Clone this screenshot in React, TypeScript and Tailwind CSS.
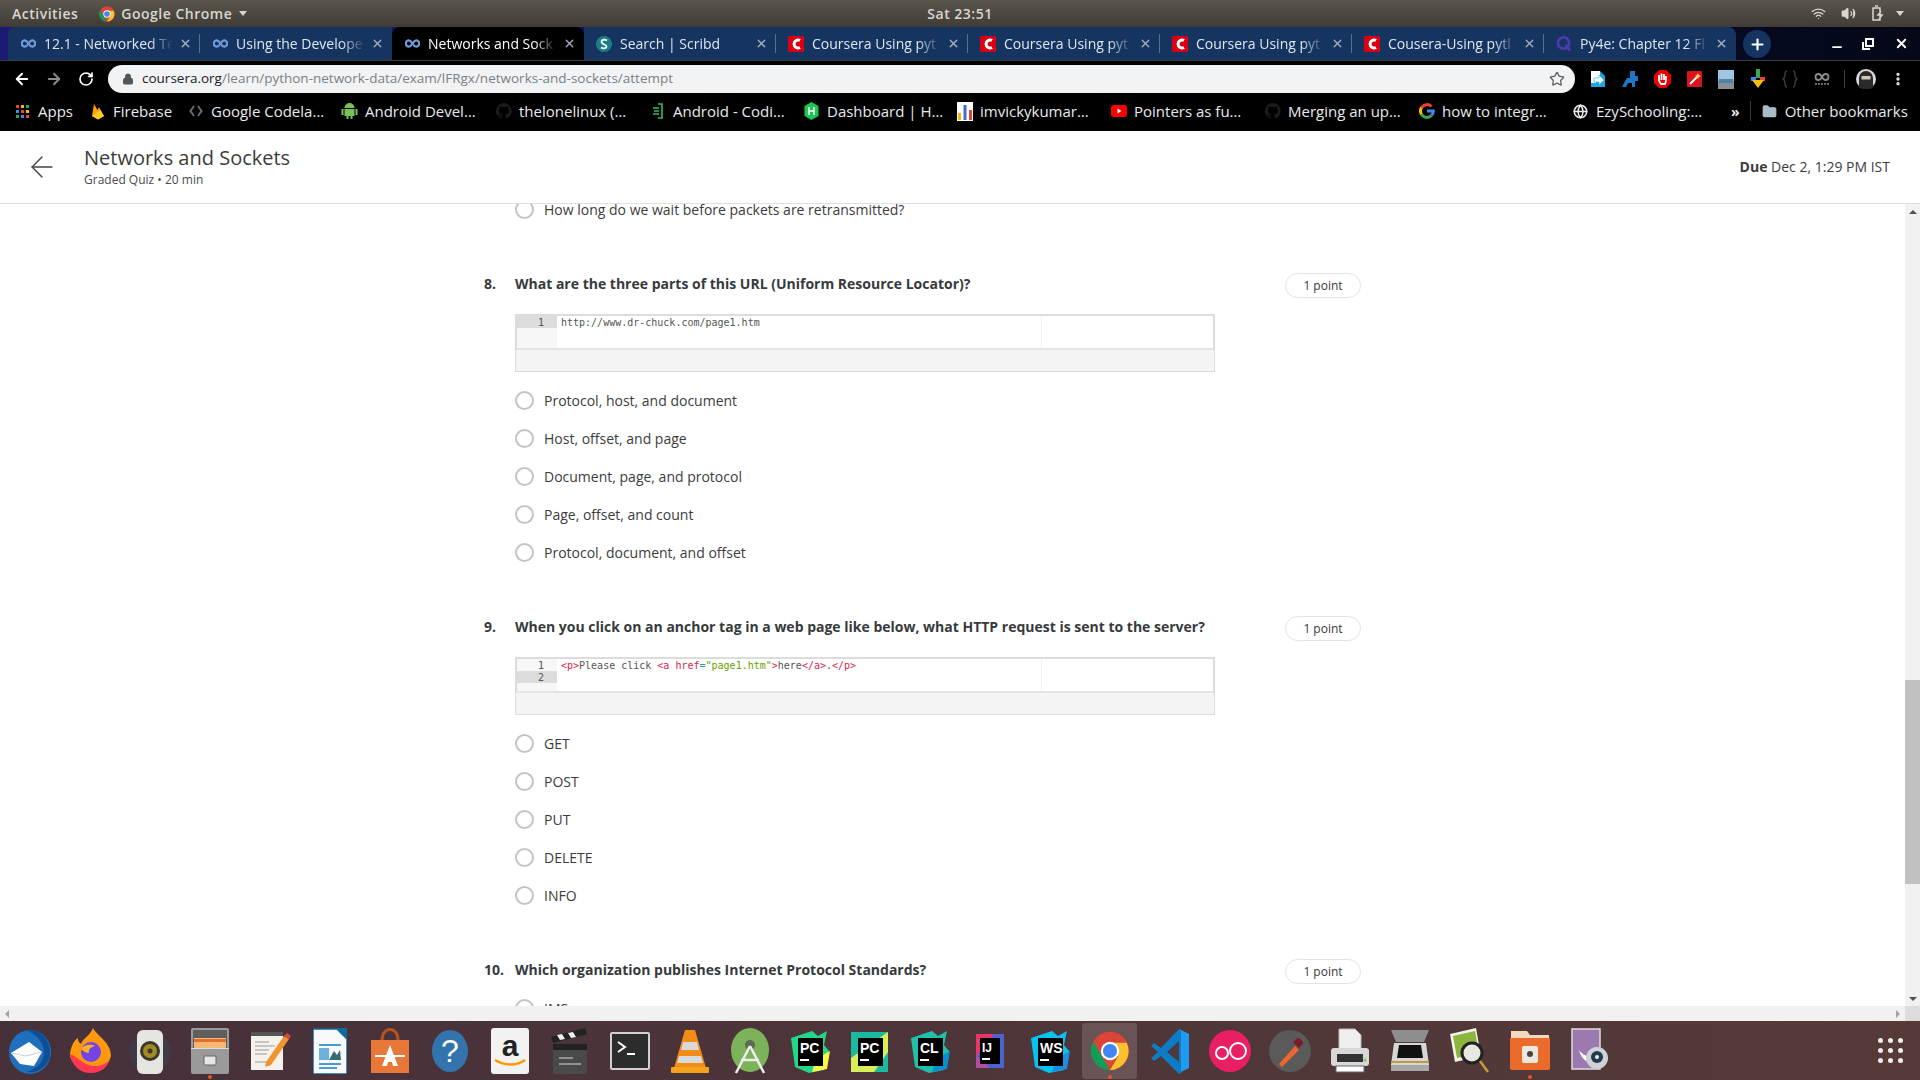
import { ReactNode } from 'react';
import { ArrowLeft, ArrowRight, RotateCw, Lock, Star, X, Plus, EllipsisVertical, Folder, Wifi, Volume2, Minus, Globe } from 'lucide-react';

const chrome = (s: number) => (
    <svg width={s} height={s} viewBox="0 0 48 48">
        <circle cx="24" cy="24" r="23" fill="#db4437" />
        <path d="M24 47A23 23 0 0 1 4 12.5L14 30l10 17z" fill="#0f9d58" />
        <path d="M24 47l10-17 -10-16h20A23 23 0 0 1 24 47z" fill="#fbc02d" />
        <circle cx="24" cy="24" r="11" fill="#fff" />
        <circle cx="24" cy="24" r="8.5" fill="#4285f4" />
    </svg>
);

const infinity = (color = '#6f9bd8') => (
    <svg width="15" height="9" viewBox="0 0 16 10" fill="none" stroke={color} strokeWidth="2.400">
        <path d="M8 5C6.500 2.500 5.500 1.500 4 1.500a3.500 3.500 0 0 0 0 7c1.500 0 2.500-1 4-3.500s2.500-3.500 4-3.500a3.500 3.500 0 0 1 0 7c-1.500 0-2.500-1-4-3.500z" />
    </svg>
);

const courseraC = (
    <svg width="16" height="16" viewBox="0 0 16 16">
        <rect width="16" height="16" fill="#d90011" />
        <path d="M12 4.500A4 4 0 1 0 12 11.500" fill="none" stroke="#fff" strokeWidth="3" />
    </svg>
);

const scribd = (
    <svg width="16" height="16" viewBox="0 0 16 16">
        <circle cx="8" cy="8" r="8" fill="#1a7f84" />
        <path d="M11 4.500C9 3 5.500 3.500 5.500 6S10.500 8.500 10.500 10.500 7 13 5 11.500" fill="none" stroke="#fff" strokeWidth="1.800" />
    </svg>
);

const quizlet = (
    <svg width="17" height="17" viewBox="0 0 17 17" fill="none" stroke="#4b3bb0" strokeWidth="2.800">
        <circle cx="8" cy="8" r="6" />
        <path d="M10 10l5 6" />
    </svg>
);

const tabs: { title: string; icon: ReactNode; active?: boolean; sep?: boolean; first?: boolean; last?: boolean }[] = [
    { title: '12.1 - Networked Te', icon: infinity(), sep: true, first: true },
    { title: 'Using the Develope', icon: infinity() },
    { title: 'Networks and Sock', icon: infinity(), active: true },
    { title: 'Search | Scribd', icon: scribd, sep: true },
    { title: 'Coursera Using pyt', icon: courseraC, sep: true },
    { title: 'Coursera Using pyt', icon: courseraC, sep: true },
    { title: 'Coursera Using pyt', icon: courseraC, sep: true },
    { title: 'Cousera-Using pytl', icon: courseraC, sep: true },
    { title: 'Py4e: Chapter 12 Fl', icon: quizlet, last: true },
];

const github = (
    <svg width="16" height="16" viewBox="0 0 16 16" fill="#1c1c1c">
        <path d="M8 0a8 8 0 0 0-2.500 15.600c.4.100.5-.200.500-.400v-1.400c-2.200.500-2.700-1-2.700-1-.4-.900-.900-1.200-.900-1.200-.700-.500.100-.500.100-.500.800.100 1.200.800 1.200.800.700 1.200 1.900.900 2.300.700.100-.500.300-.900.500-1.100-1.800-.200-3.700-.900-3.700-4 0-.900.300-1.600.800-2.100-.100-.200-.400-1 .100-2.100 0 0 .700-.200 2.200.800a7.600 7.600 0 0 1 4 0c1.500-1 2.200-.800 2.200-.800.400 1.100.200 1.900.100 2.100.500.600.800 1.300.800 2.100 0 3.100-1.900 3.700-3.700 3.900.300.300.500.700.500 1.500v2.200c0 .200.100.500.600.400A8 8 0 0 0 8 0z" />
    </svg>
);

const googleG = (
    <svg width="16" height="16" viewBox="0 0 16 16" fill="none" strokeWidth="3">
        <path d="M2.600 4.500A6.300 6.300 0 0 1 12.400 3.500" stroke="#ea4335" />
        <path d="M2.600 4.500a6.300 6.300 0 0 0 0 7" stroke="#fbbc05" />
        <path d="M2.600 11.500a6.300 6.300 0 0 0 10 .800" stroke="#34a853" />
        <path d="M8 8h6.300a6.300 6.300 0 0 1-1.700 4.300" stroke="#4285f4" />
    </svg>
);

const appsGrid = (
    <div className="grid grid-cols-3 gap-[2px] w-[14px]">
        {['#ea4335', '#fbbc05', '#34a853', '#4285f4', '#ea4335', '#fbbc05', '#34a853', '#4285f4', '#ea4335'].map((c, i) => (
            <span key={i} className="w-[3px] h-[3px]" style={{ background: c }} />
        ))}
    </div>
);

const bookmarks: { label: string; icon: ReactNode; width: string }[] = [
    { label: 'Apps', icon: appsGrid, width: 'w-[31px]' },
    {
        label: 'Firebase',
        width: 'w-[54px]',
        icon: (
            <svg width="14" height="18" viewBox="0 0 14 18">
                <path d="M1 14L3 2l3.500 6L8 5l5 9-6 3.500z" fill="#ffa000" />
                <path d="M1 14l8-6 4 6-6 3.500z" fill="#ffca28" />
            </svg>
        ),
    },
    {
        label: 'Google Codela…',
        width: 'w-[110px]',
        icon: (
            <svg width="14" height="14" viewBox="0 0 14 14" fill="none" stroke="#5f6f78" strokeWidth="2">
                <path d="M5 2L1.500 7 5 12M9 2l3.500 5L9 12" />
            </svg>
        ),
    },
    {
        label: 'Android Devel…',
        width: 'w-[110px]',
        icon: (
            <svg width="17" height="18" viewBox="0 0 17 18" fill="#78c257">
                <path d="M3.500 6a5 5 0 0 1 10 0zM3.500 7h10v7h-2v3h-2v-3h-2v3h-2v-3h-2zM0.500 7h2v6h-2zM14.500 7h2v6h-2z" />
            </svg>
        ),
    },
    { label: 'thelonelinux (…', width: 'w-[110px]', icon: github },
    {
        label: 'Android - Codi…',
        width: 'w-[110px]',
        icon: (
            <svg width="12" height="16" viewBox="0 0 12 16" fill="none" stroke="#2fbf5b" strokeWidth="1.600">
                <path d="M6 1h4v14H6M1 5h6M2 8h5M1 11h6" />
            </svg>
        ),
    },
    {
        label: 'Dashboard | H…',
        width: 'w-[109px]',
        icon: (
            <svg width="15" height="18" viewBox="0 0 15 18">
                <path d="M7.500 0l7 4v10l-7 4-7-4V4z" fill="#1bc74f" />
                <path d="M5 5v8M10 5v8M5 9h5" stroke="#fff" strokeWidth="1.500" />
            </svg>
        ),
    },
    {
        label: 'imvickykumar…',
        width: 'w-[110px]',
        icon: (
            <svg width="16" height="19" viewBox="0 0 16 19">
                <rect width="16" height="19" fill="#fff" />
                <rect x="1" y="11" width="3" height="7" fill="#f4b400" />
                <rect x="6.500" y="3" width="3" height="15" fill="#3a70c9" />
                <rect x="12" y="8" width="3" height="10" fill="#db4437" />
            </svg>
        ),
    },
    {
        label: 'Pointers as fu…',
        width: 'w-[110px]',
        icon: (
            <svg width="16" height="12" viewBox="0 0 16 12">
                <rect width="16" height="12" rx="3" fill="#f00" />
                <path d="M6.500 3.500v5l4-2.500z" fill="#fff" />
            </svg>
        ),
    },
    { label: 'Merging an up…', width: 'w-[110px]', icon: github },
    { label: 'how to integr…', width: 'w-[110px]', icon: googleG },
    {
        label: 'EzySchooling:…',
        width: 'w-[110px]',
        icon: <Globe size={15} color="#e8eaed" strokeWidth={2.500} />,
    },
];

const extensions: ReactNode[] = [
    <svg width="16" height="18" viewBox="0 0 16 18"><path d="M1 1h9l5 5v11H1z" fill="#1aa7e0" /><path d="M1 1h9v8H6v4H1z" fill="#fff" /><path d="M4 8h5V5l5 5-5 5v-3H4z" fill="#fff" stroke="#1aa7e0" strokeWidth=".6" /></svg>,
    <svg width="18" height="18" viewBox="0 0 18 18" fill="#1d76c8"><path d="M9 1h5v5h3v5h-3v6h-3v-4H7l-2 4H1l3-6 2-3h3z" /></svg>,
    <svg width="17" height="18" viewBox="0 0 17 18"><path d="M5 0h7l5 5v8l-5 5H5l-5-5V5z" fill="#e00" /><path d="M5 11V5M7.500 10V3.500M10 10V4M12 11V6M5 11l2 3h4l1-3" stroke="#fff" strokeWidth="1.800" fill="none" /></svg>,
    <svg width="15" height="16" viewBox="0 0 15 16"><rect width="15" height="16" rx="1" fill="#d9141e" /><path d="M3 13l7-7" stroke="#fff" strokeWidth="2" /><path d="M11 2l1 2 2 1-2 1-1 2-1-2-2-1 2-1z" fill="#ffd54f" /></svg>,
    <svg width="16" height="19" viewBox="0 0 16 19"><rect width="16" height="19" fill="#9fc6e0" /><rect y="11" width="16" height="8" fill="#8a8f96" /><rect x="1" y="9" width="14" height="4" fill="#4f82a8" /></svg>,
    <svg width="14" height="20" viewBox="0 0 14 20"><path d="M5 0h4v9H5z" fill="#34a853" /><path d="M0 8h5v4H0z" fill="#4285f4" /><path d="M9 8h5v4H9z" fill="#ea4335" /><path d="M1 11h12l-6 8z" fill="#fbbc05" /></svg>,
    <svg width="16" height="18" viewBox="0 0 16 18" fill="none" stroke="#3a3a3a" strokeWidth="1.500"><path d="M5 1C3 1 3 3 3 5s0 3-2 4c2 1 2 2 2 4s0 4 2 4M11 1c2 0 2 2 2 4s0 3 2 4c-2 1-2 2-2 4s0 4-2 4" /></svg>,
    <svg width="16" height="14" viewBox="0 0 16 14" fill="none" stroke="#8a8a8a" strokeWidth="1.800"><path d="M8 5C7 3 6 2 4.500 2a3 3 0 0 0 0 6C6 8 7 7 8 5s2-3 3.500-3a3 3 0 0 1 0 6C10 8 9 7 8 5z" /><path d="M1 12h14" strokeDasharray="2 1" strokeWidth="1.500" /></svg>,
];

// JetBrains style tile: colour shards behind a black square
function Jet({ label, a, b, square }: { label: string; a: string; b: string; square?: boolean }) {
    return (
        <svg width="44" height="46" viewBox="0 0 44 46">
            {square ? (
                <>
                    <rect x="3" y="4" width="37" height="40" fill={a} />
                    <path d="M40 4v20L26 44H3V30z" fill={b} opacity=".85" />
                </>
            ) : (
                <>
                    <path d="M3 10L24 3l6 5 9-5-3 14 5 6-5 19-15 3-14-6z" fill={a} />
                    <path d="M24 44l15-3 3-18-14 8z" fill={b} />
                </>
            )}
            <rect x="10" y="10" width="25" height="28" fill="#000" />
            <text x="12" y="25" fontSize="14" fontWeight="700" fill="#fff" fontFamily="'Liberation Sans', sans-serif">{label}</text>
            <rect x="12" y="31" width="9" height="2" fill="#fff" />
        </svg>
    );
}

const dockIcons: { key: string; icon: ReactNode; running?: boolean; focused?: boolean }[] = [
    { key: 'thunderbird', icon: <svg width="44" height="46" viewBox="0 0 44 46"><ellipse cx="22" cy="24" rx="21" ry="22" fill="#1f6fbe" /><path d="M18 2c12-2 24 8 24 22S30 46 18 44c12-4 18-10 18-20S28 6 18 2z" fill="#0d4f96" /><path d="M3 25L21 14l13 10-8 14-14-2z" fill="#fff" /><path d="M3 25l15 3 16-4" fill="none" stroke="#c8d0da" /></svg> },
    { key: 'firefox', icon: <svg width="44" height="46" viewBox="0 0 44 46"><path d="M25 0c4 8 18 14 18 28a21 18 0 0 1-41 0C2 20 6 12 10 10c0 4 2 5 3 6 2-6 9-8 12-16z" fill="#ff980e" /><path d="M2 26c2 12 10 19 21 19 10 0 16-6 19-13-6 6-16 8-24 4C12 33 8 28 2 26z" fill="#ff3750" /><circle cx="23" cy="24" r="10" fill="#7542e5" /><path d="M13 21c4-5 10-5 14-3-4 1-7 3-6 7-3 0-6-2-8-4z" fill="#ffb21f" /></svg> },
    { key: 'speaker', icon: <svg width="44" height="46" viewBox="0 0 44 46"><ellipse cx="22" cy="24" rx="21" ry="20" fill="#3f3a48" /><rect x="9" y="2" width="26" height="44" rx="6" fill="#e6e6e0" /><circle cx="22" cy="23" r="10" fill="#3b382e" /><circle cx="22" cy="23" r="7" fill="#a38b22" /><circle cx="22" cy="23" r="2.500" fill="#3b382e" /></svg> },
    { key: 'files', running: true, icon: <svg width="38" height="46" viewBox="0 0 38 46"><rect width="38" height="46" rx="2" fill="#9a9a9a" /><rect x="2" y="2" width="34" height="18" fill="#5e5e5e" /><rect x="3" y="10" width="32" height="10" fill="#f3b778" /><rect x="3" y="11" width="32" height="3" fill="#e2702a" /><rect x="13" y="28" width="12" height="9" rx="1" fill="#e6e6e6" stroke="#666" /><rect x="0" y="20" width="38" height="1" fill="#ddd" /></svg> },
    { key: 'notes', icon: <svg width="42" height="46" viewBox="0 0 42 46"><rect x="2" y="6" width="32" height="36" fill="#f4f2ea" /><path d="M2 4h32v4H2z" fill="#555" /><path d="M6 14h14M6 18h20M6 22h14M6 26h12M6 34h14" stroke="#999" strokeWidth="1" /><path d="M17 34L35 8l5 3-18 26-6 2z" fill="#f09331" /><path d="M35 8l3-3 4 3-2 3z" fill="#d44" /></svg> },
    { key: 'writer', icon: <svg width="34" height="46" viewBox="0 0 34 46"><path d="M0 1h24l10 10v35H0z" fill="#f7fafc" stroke="#116a9c" strokeWidth="1.500" /><path d="M23 0h11v11z" fill="#116a9c" /><path d="M6 17h22M6 36h22M6 40h18" stroke="#4b9bd0" strokeWidth="2" /><rect x="6" y="20" width="10" height="12" fill="#6eb1de" /><path d="M16 32l5-9 3 4 3-5 1 10z" fill="#386a6e" /></svg> },
    { key: 'store', icon: <svg width="38" height="46" viewBox="0 0 38 46"><path d="M0 12h38v33H0z" fill="#e97737" /><path d="M11 12c0-14 16-14 16 0" fill="none" stroke="#b8541f" strokeWidth="3" /><path d="M19 17l-8 21h5l1-4h4l1 4h5z" fill="#fff" /><rect x="4" y="27" width="30" height="2" fill="#fff" /></svg> },
    { key: 'help', icon: <svg width="36" height="42" viewBox="0 0 36 42"><ellipse cx="18" cy="21" rx="18" ry="21" fill="#3474ad" /><text x="18" y="32" fontSize="32" textAnchor="middle" fill="#fff" fontFamily="'Liberation Sans', sans-serif">?</text></svg> },
    { key: 'amazon', icon: <svg width="38" height="46" viewBox="0 0 38 46"><rect width="38" height="46" rx="3" fill="#f2f2f2" /><text x="19" y="28" fontSize="30" fontWeight="700" textAnchor="middle" fill="#222" fontFamily="'Liberation Sans', sans-serif">a</text><path d="M4 32c10 6 22 6 30 0" fill="none" stroke="#f90" strokeWidth="2.500" /></svg> },
    { key: 'clapper', icon: <svg width="38" height="46" viewBox="0 0 38 46"><path d="M0 9L34 0l2 6-34 9z" fill="#222" /><path d="M6 7l5-1 3 5-5 1zM17 5l5-1 3 5-5 1z" fill="#eee" /><rect x="2" y="16" width="34" height="30" rx="2" fill="#4a4a4a" /><rect x="2" y="16" width="34" height="6" fill="#222" /><path d="M8 30h14M8 36h22" stroke="#aaa" strokeWidth="1.500" /></svg> },
    { key: 'terminal', icon: <svg width="40" height="38" viewBox="0 0 40 38"><rect width="40" height="38" rx="2" fill="#d0d0d0" /><rect x="2" y="2" width="36" height="34" fill="#2c2c2c" /><path d="M8 10l7 5-7 5" fill="none" stroke="#fff" strokeWidth="2" /><path d="M17 22h8" stroke="#fff" strokeWidth="2" /></svg> },
    { key: 'vlc', icon: <svg width="38" height="46" viewBox="0 0 38 46"><path d="M14 2h10l11 38H3z" fill="#f28c16" /><path d="M12 14h14l2 8H10zM8 28h22l2 7H6z" fill="#d8d8d8" /><rect y="39" width="38" height="6" rx="1" fill="#f6a21c" /></svg> },
    { key: 'studio', icon: <svg width="38" height="46" viewBox="0 0 38 46"><ellipse cx="19" cy="22" rx="19" ry="22" fill="#7cb35a" /><circle cx="19" cy="17" r="5" fill="#5e6a52" /><path d="M19 18L5 45M19 18l14 27M10 32h18" fill="none" stroke="#eee" strokeWidth="2.500" /></svg> },
    { key: 'pc1', icon: <Jet label="PC" a="#21d789" b="#fcf84a" /> },
    { key: 'pc2', icon: <Jet label="PC" a="#1bb9a0" b="#fcf84a" square /> },
    { key: 'cl', icon: <Jet label="CL" a="#1ec0a8" b="#0a8ed0" /> },
    { key: 'ij', icon: <svg width="34" height="40" viewBox="0 0 34 40"><path d="M3 3h28v34H3z" fill="#4a63d0" /><path d="M3 3h18L3 26z" fill="#e8356a" /><path d="M3 37h14L3 24z" fill="#b04fa0" /><rect x="7" y="7" width="20" height="26" fill="#000" /><text x="9" y="21" fontSize="12" fontWeight="700" fill="#fff" fontFamily="'Liberation Sans', sans-serif">IJ</text><rect x="9" y="27" width="8" height="2" fill="#fff" /></svg> },
    { key: 'ws', icon: <Jet label="WS" a="#07c3f2" b="#1a8fe0" /> },
    { key: 'chrome', running: true, focused: true, icon: chrome(40) },
    { key: 'vscode', icon: <svg width="38" height="46" viewBox="0 0 38 46"><path d="M28 1l10 5v34l-10 5z" fill="#1f9cf0" /><path d="M28 1L10 20 3 15l-3 3 7 6-7 6 3 3 7-5 18 18 2-1V3z" fill="#0e7cc4" /><path d="M28 13L16 24l12 10z" fill="#4a3a3e" /></svg> },
    { key: 'oo', icon: <svg width="42" height="42" viewBox="0 0 42 42"><circle cx="21" cy="21" r="21" fill="#e91e63" /><circle cx="13" cy="23" r="6" fill="none" stroke="#fff" strokeWidth="2" /><circle cx="29" cy="21" r="8" fill="none" stroke="#fff" strokeWidth="2" /></svg> },
    { key: 'dropper', icon: <svg width="42" height="42" viewBox="0 0 42 42"><circle cx="21" cy="21" r="21" fill="#5a5a5a" /><path d="M10 34l16-18 4 4-17 17z" fill="#f0652f" /><path d="M24 12l6 6 3-3c3-3-3-9-6-6z" fill="#7a1d2b" /></svg> },
    { key: 'printer', icon: <svg width="40" height="46" viewBox="0 0 40 46"><path d="M9 1h16l6 6v16H9z" fill="#efefef" stroke="#bbb" /><rect x="1" y="20" width="38" height="18" rx="3" fill="#d8d8d8" /><rect x="7" y="26" width="26" height="8" fill="#333" /><rect x="6" y="38" width="28" height="6" fill="#fff" stroke="#666" /><circle cx="35" cy="32" r="1.500" fill="#8bc34a" /></svg> },
    { key: 'scanner', icon: <svg width="38" height="44" viewBox="0 0 38 44"><path d="M0 1h38l-5 12H5z" fill="#8e8e8e" /><path d="M3 14h32l3 22H0z" fill="#d6d6d4" /><path d="M8 16h22l2 13H6z" fill="#111" /><rect y="32" width="38" height="2" fill="#c09a40" /><rect y="36" width="38" height="6" fill="#a8a8a8" /></svg> },
    { key: 'screenshot', icon: <svg width="40" height="46" viewBox="0 0 40 46"><path d="M0 6L26 0l5 28-26 6z" fill="#f2f2e6" /><path d="M3 8l22-5 4 22-22 5z" fill="#8ab53f" /><circle cx="22" cy="25" r="10" fill="#e8e8e0" stroke="#222" strokeWidth="3" /><path d="M30 33l8 11" stroke="#c49a3a" strokeWidth="2.500" /></svg> },
    { key: 'folder', running: true, icon: <svg width="40" height="42" viewBox="0 0 40 42"><path d="M1 1h16l3 4h19v8H1z" fill="#f6d7c0" /><path d="M0 8h40v30a2 2 0 0 1-2 2H2a2 2 0 0 1-2-2z" fill="#ea6b2b" /><rect x="12" y="16" width="16" height="17" rx="2" fill="#ece8de" /><circle cx="20" cy="24" r="3" fill="#444" /></svg> },
    { key: 'cheese', icon: <svg width="38" height="46" viewBox="0 0 38 46"><rect x="1" y="1" width="28" height="40" fill="#9c7ab0" stroke="#ddd" strokeWidth="1.500" /><path d="M8 22c6 8 14 8 20 4-6 12-16 10-20-4z" fill="#fff" /><circle cx="26" cy="30" r="11" fill="#cfd3d6" /><circle cx="26" cy="29" r="6" fill="#243a4f" /><circle cx="26" cy="29" r="2" fill="#eee" /></svg> },
];

const option = (label: string) => (
    <div key={label} className="flex items-center h-[38px] pl-[31px]">
        <span className="w-[19px] h-[19px] rounded-full border-2 border-[#c4c4c4] bg-white shrink-0" />
        <span className="ml-[10px] text-[14px] text-[#3c3c3c]">{label}</span>
    </div>
);

function QuestionHead({ num, text }: { num: string; text: string }) {
    return (
        <div className="flex items-center justify-between h-[26px]">
            <div className="flex items-center text-[14px] font-bold text-[#373a3c]">
                <span className="w-[31px]">{num}</span>
                <span>{text}</span>
            </div>
            <span className="mt-[4px] pt-px flex items-center justify-center w-[76px] h-[25px] rounded-full border border-[#e3e3e3] text-[12px] text-[#373a3c]">1 point</span>
        </div>
    );
}

function CodeBox({ lines, active }: { lines: ReactNode[]; active: number }) {
    return (
        <div className="ml-[31px] w-[700px] h-[58px] border border-[#dcdcdc] flex flex-col">
            <div className="flex-1 flex border border-[#dcdcdc] border-b-2 border-b-[#e4e4e4] bg-white min-h-0">
                <div className="w-[40px] bg-[#f7f7f7] text-right font-['DejaVu_Sans_Mono',monospace] text-[10px] leading-[12px] text-[#555]">
                    {lines.map((_, i) => (
                        <div key={i} className={`h-[12px] pt-px pr-[13px] ${i === active ? 'bg-[#dcdcdc]' : ''}`}>{i + 1}</div>
                    ))}
                </div>
                <div className="w-[485px] border-r border-[#f2f2f2] pl-[4px] font-['DejaVu_Sans_Mono',monospace] text-[10px] leading-[12px] text-[#555] whitespace-pre">
                    {lines.map((l, i) => <div key={i} className="h-[12px] pt-px">{l}</div>)}
                </div>
            </div>
            <div className="h-[21px] bg-[#f4f4f4] shrink-0" />
        </div>
    );
}

const T = ({ children }: { children: ReactNode }) => <span className="text-[#d81e4a]">{children}</span>;

export default function App() {
    return (
        <div className="w-[1920px] h-[1080px] flex flex-col overflow-hidden bg-white font-['Open_Sans','Noto_Sans',sans-serif]">
            {/* gnome top bar */}
            <div className="h-[27px] shrink-0 grid grid-cols-[1fr_auto_1fr] items-center bg-gradient-to-b from-[#5a564e] to-[#3f3c35] text-[14px] tracking-[0.5px] font-semibold text-[#d9d6cf]">
                <div className="flex items-center pl-[12px]">
                    <span>Activities</span>
                    <span className="ml-[21px] mr-[6px]">{chrome(16)}</span>
                    <span>Google Chrome</span>
                    <span className="ml-[7px] w-0 h-0 border-x-[4px] border-x-transparent border-t-[5px] border-t-[#d9d6cf]" />
                </div>
                <div>Sat 23:51</div>
                <div className="flex items-center justify-end gap-[15px] pr-[16px]">
                    <Wifi size={15} />
                    <Volume2 size={15} fill="#d9d6cf" />
                    <svg width="13" height="17" viewBox="0 0 13 17" fill="none" stroke="#d9d6cf" strokeWidth="1.500">
                        <path d="M4 1h3M2 3h7v12H2zM10 6L7 10h4l-3 4" />
                    </svg>
                    <span className="-ml-[3px] w-0 h-0 border-x-[4px] border-x-transparent border-t-[5px] border-t-[#d9d6cf]" />
                </div>
            </div>

            {/* tab strip */}
            <div className="h-[34px] shrink-0 flex items-stretch pl-[8px] bg-gradient-to-r from-[#1c1a72] via-[#16104a] to-[#040818] border-b border-[#3c3c3c]">
                {tabs.map((t, i) => (
                    <div
                        key={i}
                        className={`relative w-[192px] shrink-0 flex items-center pl-[12px] pr-[8px] text-[14px] ${t.active ? 'bg-black rounded-t-[8px] text-white' : 'bg-[#15345f] text-[#dfe6ef]'} ${t.first ? 'rounded-tl-[8px]' : ''} ${t.last ? 'rounded-tr-[8px]' : ''}`}
                    >
                        <span className="w-[16px] flex justify-center shrink-0">{t.icon}</span>
                        <span className="ml-[8px] flex-1 min-w-0 whitespace-nowrap [mask-image:linear-gradient(to_right,black_82%,transparent)]">{t.title}</span>
                        <X size={13} strokeWidth={2.500} className="ml-[6px] shrink-0 text-[#a3b1c4]" />
                        {t.sep && <span className="absolute right-0 top-[7px] w-px h-[19px] bg-[#5a7090]" />}
                    </div>
                ))}
                <div className="ml-[7px] mt-[3px] w-[28px] h-[28px] rounded-full bg-[#15345f] flex items-center justify-center">
                    <Plus size={17} strokeWidth={3} className="text-white" />
                </div>
                <div className="flex-1 flex items-center justify-end pr-[11px] gap-[20px] text-white">
                    <Minus size={14} strokeWidth={3} className="mt-[6px] -mr-[2px]" />
                    <svg width="12" height="12" viewBox="0 0 12 12" fill="none" stroke="#fff" strokeWidth="2">
                        <path d="M4 1h7v7H4zM1 4v7h7" />
                    </svg>
                    <X size={15} strokeWidth={3} />
                </div>
            </div>

            {/* toolbar */}
            <div className="h-[32px] shrink-0 bg-black flex items-start pt-[4px]">
                <div className="w-[108px] h-[28px] flex items-center text-white">
                    <ArrowLeft size={18} strokeWidth={2.500} className="ml-[13px]" />
                    <ArrowRight size={18} strokeWidth={2.500} className="ml-[14px] text-[#8a8a8a]" />
                    <RotateCw size={16} strokeWidth={2.500} className="ml-[15px]" />
                </div>
                <div className="w-[1467px] h-[28px] rounded-full bg-[#f1f3f4] flex items-center text-[13.5px] pl-[14px] pr-[10px]">
                    <Lock size={12} fill="#555" className="text-[#555]" />
                    <span className="ml-[8px] -mt-px text-[#202124]">coursera.org</span>
                    <span className="-mt-px text-[#7a8088]">/learn/python-network-data/exam/lFRgx/networks-and-sockets/attempt</span>
                    <Star size={16} className="ml-auto text-[#5f6368]" />
                </div>
                <div className="flex-1 h-[28px] flex items-center pl-[7px]">
                    {extensions.map((e, i) => (
                        <span key={i} className="w-[32px] flex justify-center shrink-0">{e}</span>
                    ))}
                    <span className="w-px h-[18px] bg-[#3a3a3a] ml-[6px]" />
                    <svg width="20" height="20" viewBox="0 0 20 20" className="ml-[11px]">
                        <circle cx="10" cy="10" r="10" fill="#d8d8d8" />
                        <path d="M3 18V9a7 7 0 0 1 14 0v9a10 10 0 0 1-14 0z" fill="#2a2a2a" />
                        <rect x="5.500" y="7" width="9" height="3.500" fill="#cfc6b8" />
                    </svg>
                    <EllipsisVertical size={16} strokeWidth={3} className="ml-[14px] text-[#e8eaed]" />
                </div>
            </div>

            {/* bookmarks */}
            <div className="h-[38px] shrink-0 bg-black flex items-center pb-[2px] pl-[14px] text-[15px] text-[#e8eaed]">
                {bookmarks.map((b, i) => (
                    <div key={i} className="flex items-center shrink-0 mr-[20px]">
                        <span className="w-[17px] flex justify-center shrink-0">{b.icon}</span>
                        <span className={`ml-[7px] whitespace-nowrap ${b.width}`}>{b.label}</span>
                    </div>
                ))}
                <span className="text-[14px] font-bold ml-[5px]">»</span>
                <span className="ml-[10px] w-px h-[20px] bg-[#3a3a3a]" />
                <Folder size={15} fill="#a9bcc7" className="ml-[11px] text-[#a9bcc7]" />
                <span className="ml-[8px] whitespace-nowrap">Other bookmarks</span>
            </div>

            {/* quiz header */}
            <div className="h-[73px] shrink-0 flex items-center border-b border-[#dfdfdf] bg-white relative z-10 pr-[30px]">
                <ArrowLeft size={34} strokeWidth={1} className="ml-[25px] text-[#444]" />
                <div className="ml-[25px] flex flex-col">
                    <span className="text-[20px] leading-[24px] text-[#3c3c3c]">Networks and Sockets</span>
                    <span className="mt-[2px] text-[12px] leading-[16px] text-[#4a4a4a]">Graded Quiz • 20 min</span>
                </div>
                <div className="ml-auto -mt-[2px] text-[14px] text-[#3c3c3c]"><b>Due</b> Dec 2, 1:29 PM IST</div>
            </div>

            {/* page body */}
            <div className="flex-1 min-h-0 flex">
                <div className="flex-1 min-w-0 flex flex-col">
                    <div className="flex-1 min-h-0 overflow-hidden">
                        <div className="ml-[484px] w-[877px] -mt-[14px]">
                            {option('How long do we wait before packets are retransmitted?')}
                            <div className="mt-[42px]">
                                <QuestionHead num="8." text="What are the three parts of this URL (Uniform Resource Locator)?" />
                                <div className="mt-[18px]">
                                    <CodeBox active={0} lines={['http://www.dr-chuck.com/page1.htm']} />
                                </div>
                                <div className="mt-[9px]">
                                    {['Protocol, host, and document', 'Host, offset, and page', 'Document, page, and protocol', 'Page, offset, and count', 'Protocol, document, and offset'].map(option)}
                                </div>
                            </div>
                            <div className="mt-[42px]">
                                <QuestionHead num="9." text="When you click on an anchor tag in a web page like below, what HTTP request is sent to the server?" />
                                <div className="mt-[18px]">
                                    <CodeBox
                                        active={1}
                                        lines={[
                                            <>
                                                <T>&lt;p&gt;</T>Please click <T>&lt;a href</T><span className="text-[#1d9a9a]">=</span><span className="text-[#6a9f00]">"page1.htm"</span><T>&gt;</T>here<T>&lt;/a&gt;</T>.<T>&lt;/p&gt;</T>
                                            </>,
                                            '',
                                        ]}
                                    />
                                </div>
                                <div className="mt-[9px]">
                                    {['GET', 'POST', 'PUT', 'DELETE', 'INFO'].map(option)}
                                </div>
                            </div>
                            <div className="mt-[42px]">
                                <QuestionHead num="10." text="Which organization publishes Internet Protocol Standards?" />
                                <div className="mt-[7px]">{option('IMS')}</div>
                            </div>
                        </div>
                    </div>
                    {/* horizontal scrollbar */}
                    <div className="h-[15px] shrink-0 bg-[#f1f1f1] flex items-center justify-between px-[5px]">
                        <span className="w-0 h-0 border-y-[4px] border-y-transparent border-r-[4px] border-r-[#a3a3a3]" />
                        <span className="w-0 h-0 border-y-[4px] border-y-transparent border-l-[4px] border-l-[#a3a3a3]" />
                    </div>
                </div>
                {/* vertical scrollbar */}
                <div className="w-[15px] shrink-0 bg-[#f1f1f1] flex flex-col">
                    <div className="h-[15px] flex items-center justify-center">
                        <span className="w-0 h-0 border-x-[4px] border-x-transparent border-b-[4px] border-b-[#505050]" />
                    </div>
                    <div className="mt-[461px] h-[204px] bg-[#c1c1c1]" />
                    <div className="flex-1" />
                    <div className="h-[15px] flex items-center justify-center">
                        <span className="w-0 h-0 border-x-[4px] border-x-transparent border-t-[4px] border-t-[#505050]" />
                    </div>
                    <div className="h-[15px] bg-[#dcdcdc]" />
                </div>
            </div>

            {/* dock */}
            <div className="h-[59px] shrink-0 flex items-stretch bg-gradient-to-r from-[#46303a] to-[#553a37]">
                {dockIcons.map((d) => (
                    <div key={d.key} className="relative w-[60px] shrink-0 flex items-center justify-center">
                        {d.focused && <span className="absolute left-[2px] right-[3px] top-[2px] bottom-[1px] rounded-[3px] bg-white/15" />}
                        <span className="relative flex">{d.icon}</span>
                        {d.running && <span className="absolute bottom-[1px] left-1/2 -ml-[2px] w-[4px] h-[4px] rounded-full bg-[#e95420]" />}
                    </div>
                ))}
                <div className="ml-auto mr-[17px] self-center grid grid-cols-3 gap-[5px]">
                    {Array.from({ length: 9 }).map((_, i) => (
                        <span key={i} className="w-[5px] h-[5px] rounded-full bg-[#eee]" />
                    ))}
                </div>
            </div>
        </div>
    );
}
